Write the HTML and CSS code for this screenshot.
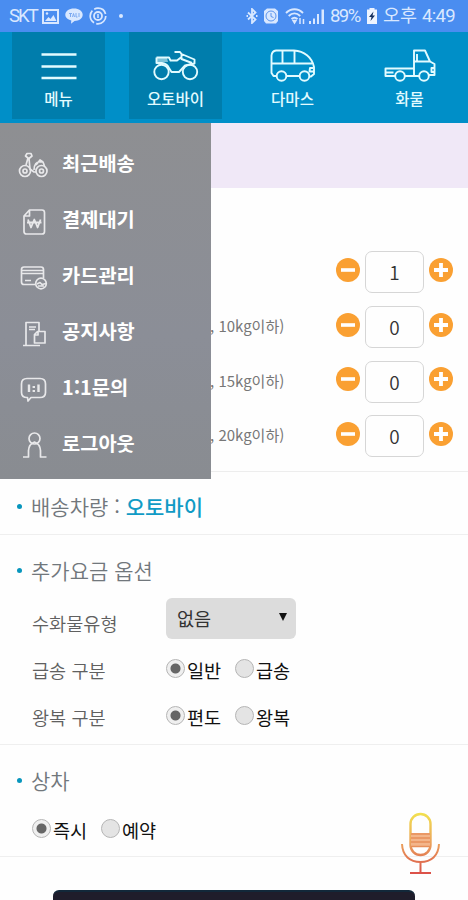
FILE: index.html
```html
<!DOCTYPE html>
<html lang="ko">
<head>
<meta charset="utf-8">
<title>배송 접수</title>
<link rel="stylesheet" href="styles.css">
</head>
<body>
<svg class="defs" width="0" height="0">
  <symbol id="minus" viewBox="0 0 24 24"><circle cx="12" cy="12" r="12" fill="#faa032"/><path d="M5 12h14" stroke="#fff" stroke-width="3.6"/></symbol>
  <symbol id="plus" viewBox="0 0 24 24"><circle cx="12" cy="12" r="12" fill="#faa032"/><path d="M5 12h14M12 5v14" stroke="#fff" stroke-width="3.8"/></symbol>
</svg>
<div class="app">
  <header class="status">
    <div class="status-left">
      <span class="carrier">SKT</span>
      <svg width="17" height="15" viewBox="0 0 17 15"><rect x="1" y="1" width="15" height="13" fill="none" stroke="currentColor" stroke-width="2"/><path d="M3 12l3.500-4 2 2 3-4 3 6z" fill="currentColor"/><circle cx="5" cy="4.500" r="1.200" fill="currentColor"/></svg>
      <svg class="talk" width="18" height="16" viewBox="0 0 18 16"><path d="M9 .5c5 0 8.700 2.700 8.700 6.300S14 13 9.500 13L6 15.700l.3-3.200C2.700 11.700.3 9.500.3 6.800.3 3.200 4 .5 9 .5z" fill="currentColor"/><path d="M4 5.500h3M5.500 5.500v3.500M7.500 9l1-3.500 1 3.500M11 5v4h1.500M14 5v4" stroke="#7ba9f1" fill="none"/></svg>
      <svg class="ring" width="18" height="18" viewBox="0 0 18 18" fill="none" stroke="currentColor"><circle cx="9" cy="9" r="7.800" stroke-width="1.700" stroke-dasharray="14 2.300"/><circle cx="9" cy="9" r="4" stroke-width="1.800"/><path d="M9 7v4" stroke-width="1.500"/></svg>
      <i class="dot"></i>
    </div>
    <div class="status-right">
      <svg width="12" height="16" viewBox="0 0 12 16" fill="none" stroke="currentColor" stroke-width="1.800"><path d="M2 4.500l7.500 7L6 15V1l3.500 3.500L2 11.500"/><path d="M.5 8h1.500M10 8h1.500"/></svg>
      <svg class="alarm" width="16" height="16" viewBox="0 0 16 16"><path d="M1 3l3-2.500h8L15 3v10l-2 2.500H3L1 13z" fill="currentColor"/><circle cx="8" cy="8" r="5" fill="none" stroke="#5b94ee" stroke-width="1"/><path d="M8 5v3.500l2.500 1" fill="none" stroke="#5b94ee"/></svg>
      <svg class="wifi" width="21" height="17" viewBox="0 0 21 17" fill="none" stroke="currentColor" stroke-width="1.900"><path d="M1 5c5-5 12-5 17 0M3.700 8c3.500-3.300 8-3.300 11.500 0M6.500 11c2-1.800 4-1.800 6 0"/><path d="M8 12.500h3l-1.500 2.500zM15 10v6M18.500 11v5" stroke-width="1.500"/></svg>
      <svg class="signal" width="17" height="16" viewBox="0 0 17 16" fill="currentColor"><path d="M1 13h2v3H1zM5 10.500h2V16H5zM9 6h2v10H9zM13.500 1.500H16V16h-2.500z"/></svg>
      <span class="pct">89%</span>
      <svg class="battery" width="12" height="16" viewBox="0 0 12 16"><path d="M3.500 0h5v1.500H11V16H1V1.500h2.500z" fill="#eef4ff"/><path d="M7.500 3.500L3 9h2.500L4.500 13 9 7.500H6.500z" fill="#16305e"/></svg>
      <span class="ampm">오후</span>
      <span class="clock">4:49</span>
    </div>
  </header>

  <nav class="tabs">
    <a class="tab on">
      <svg width="46" height="36" viewBox="0 0 46 36"><path d="M5.500 6.500h35M5.500 18.500h35M5.500 30h35" stroke="currentColor" stroke-width="2.500"/></svg>
      <span>메뉴</span>
    </a>
    <a class="tab on">
      <svg width="46" height="36" viewBox="0 0 46 36" fill="none" stroke="currentColor" stroke-width="1.900" stroke-linejoin="round"><circle cx="8.500" cy="24" r="7.200"/><circle cx="37" cy="24" r="7.200"/><path d="M3.500 9.500H16L17.500 12.500H24L28.500 9M21.500 4H27L28.500 6 41.500 11.500V15.500L32 17.500 26 24H18.500L15 18.500M3.500 9.500V15H9Q13.500 15.500 15.500 19M28.500 6V11L39 15"/><path d="M4 10h10l1 4H4z" fill="currentColor" fill-opacity=".55" stroke="none"/></svg>
      <span>오토바이</span>
    </a>
    <a class="tab">
      <svg width="46" height="36" viewBox="0 0 46 36" fill="none" stroke="currentColor" stroke-width="1.900" stroke-linejoin="round"><path d="M6 28H3.500L1.500 25V7.500Q2 3 6 2.500H24C34 3 42 9 44 19V26L41 28.500H40M16 28H30M1.500 15.500H42M12.500 3v12.500M24.500 3v12.500M43 20h-3l-.5 3.500H44"/><circle cx="11.500" cy="28" r="4.800"/><circle cx="34.500" cy="28" r="4.800"/></svg>
      <span>다마스</span>
    </a>
    <a class="tab">
      <svg width="52" height="36" viewBox="0 0 52 36" fill="none" stroke="currentColor" stroke-width="1.900" stroke-linejoin="round"><path d="M11 28H1.500V20.500H30M21 28h14M30 28V2.500H41L46 13.500 50.500 16V27H45M30 13.500H46M1.500 24.500h8M50.500 20h-3v4h3M33 6v7.500"/><circle cx="16" cy="28" r="4.800"/><circle cx="40" cy="28" r="4.800"/></svg>
      <span>화물</span>
    </a>
  </nav>

  <main class="content">
    <div class="banner"></div>
    <section class="sizes">
      <div class="size"><span class="limit"></span><svg><use href="#minus"/></svg><span class="qty">1</span><svg><use href="#plus"/></svg></div>
      <div class="size"><span class="limit">, 10kg이하)</span><svg><use href="#minus"/></svg><span class="qty">0</span><svg><use href="#plus"/></svg></div>
      <div class="size"><span class="limit">, 15kg이하)</span><svg><use href="#minus"/></svg><span class="qty">0</span><svg><use href="#plus"/></svg></div>
      <div class="size"><span class="limit">, 20kg이하)</span><svg><use href="#minus"/></svg><span class="qty">0</span><svg><use href="#plus"/></svg></div>
    </section>
    <section class="vehicle">
      <h2>배송차량 : <b>오토바이</b></h2>
    </section>
    <section class="extras">
      <h2>추가요금 옵션</h2>
      <div class="field pick"><span class="name">수화물유형</span><span class="select">없음<i></i></span></div>
      <div class="field"><span class="name">급송 구분</span><span class="radio"><i class="checked"></i>일반</span><span class="radio"><i></i>급송</span></div>
      <div class="field"><span class="name">왕복 구분</span><span class="radio"><i class="checked"></i>편도</span><span class="radio"><i></i>왕복</span></div>
    </section>
    <section class="pickup">
      <h2>상차</h2>
      <div class="field"><span class="radio"><i class="checked"></i>즉시</span><span class="radio"><i></i>예약</span></div>
    </section>
    <div class="submit"></div>
  </main>

  <aside class="drawer">
    <a><svg viewBox="0 0 32 32"><circle cx="8" cy="22" r="5.500"/><circle cx="8" cy="22" r="2"/><circle cx="24.500" cy="22" r="5.500"/><circle cx="24.500" cy="22" r="2"/><path d="M9 16L11 9 8.500 7 10 4.500h4L15 7l-3 2.500L13 20l4 3h2M17 21c0-6 3-8 5-8h4l1.500 4M19 16l4-5 3 2"/></svg>최근배송</a>
    <a><svg viewBox="0 0 32 32"><path d="M12.500 5H25q2.500 0 2.500 2.500v19Q27.500 29 25 29H9.500Q7 29 7 26.500V11zM12.500 5v6H7"/><path d="M11 14.500l3 8 3.300-8 3.300 8 3-8M10 17.500h14.500" stroke-width="1.800"/></svg>결제대기</a>
    <a><svg viewBox="0 0 32 32"><path d="M18 23.500H7Q4.500 23.500 4.500 21V8.500Q4.500 6 7 6H24Q26.500 6 26.500 8.500V17M4.500 9.500H26.500M4.500 12.500H26.500M8 19.500h6"/><circle cx="24" cy="22.500" r="5.300"/><path d="M20 23l3-1.500 2 2 4-1M21 25h6"/></svg>카드관리</a>
    <a><svg viewBox="0 0 32 32"><path d="M6 28.500h17M9 28V5.500H22V14M12 10h7M12 12.500h6M20.500 14.500H28V26H17.500V17.500zM21 14.500V18h-3.500"/></svg>공지사항</a>
    <a><svg viewBox="0 0 32 32"><path d="M10 5.500H23q5.500 0 5.500 5.500v8.500q0 5-5.500 5H14l-3 3.500-.5-3.500H10q-5.500 0-5.500-5V11q0-5.500 5.500-5.500z"/><path d="M12 11.500v7.500M21.500 11.500v7.500M16.800 13v2M16.800 17v2" stroke-width="2.400"/></svg>1:1문의</a>
    <a><svg viewBox="0 0 32 32"><circle cx="17.500" cy="9.500" r="5.500"/><path d="M6 28h5.500V21.500Q12 15 17.500 13 23 15 23.500 21.500V28H29.500"/></svg>로그아웃</a>
  </aside>

  <svg class="mic" width="42" height="64" viewBox="0 0 42 64" fill="none">
    <defs><linearGradient id="warm" x1="0" y1="0" x2="0" y2="64" gradientUnits="userSpaceOnUse"><stop offset="0" stop-color="#f2e34f"/><stop offset=".5" stop-color="#eba05c"/><stop offset="1" stop-color="#d84a45"/></linearGradient></defs>
    <rect x="10.500" y="2" width="20" height="41" rx="10" stroke="url(#warm)" stroke-width="2.400"/>
    <path d="M11 21H30V35H11z" fill="#f3b58a"/>
    <path d="M11 22H30M11 26H30M11 30H30M11 34.500H30" stroke="#e78f5a" stroke-width="1.500"/>
    <path d="M2 32C2.500 44 10 50 20.500 50S38.500 44 39 32M20.500 50V60" stroke="url(#warm)" stroke-width="2"/>
    <path d="M10 61H31" stroke="#dc5249" stroke-width="2"/>
  </svg>
</div>
</body>
</html>
```
FILE: styles.css
```css
* { box-sizing: border-box; }
body { margin: 0; background: #fefefe; font-family: "Noto Sans CJK KR", sans-serif; }
.defs { position: absolute; }
.app { position: relative; width: 468px; height: 900px; overflow: hidden; background: #fefefe; }

.status { display: flex; justify-content: space-between; height: 32px; padding: 0 13px 0 9px; background: #4a8df0; color: #d9e8ff; font: 18.5px/32px Roboto, "Noto Sans CJK KR", sans-serif; }
.status-left, .status-right { display: flex; align-items: center; }
.status svg { flex: none; }
.carrier { width: 33px; letter-spacing: -1.9px; }
.talk { margin-left: 6px; }
.ring { margin-left: 6px; }
.dot { width: 4px; height: 4px; margin-left: 12px; border-radius: 50%; background: #d9e8ff; }
.alarm { margin-left: 5px; }
.wifi { margin-left: 6px; }
.signal { margin-left: 2px; }
.pct { width: 32px; margin-left: 5px; letter-spacing: -1.5px; }
.battery { margin-left: 4px; }
.ampm { margin-left: 5px; }
.clock { width: 33px; margin-left: 5px; letter-spacing: -.7px; }

.tabs { display: grid; grid-template-columns: repeat(4, 1fr); height: 91px; padding-bottom: 4px; background: #008fc8; color: #e2fbff; }
.tab { display: flex; flex-direction: column; align-items: center; margin: 0 12px; padding-top: 16px; font-size: 15.5px; font-weight: 500; line-height: 22px; }
.tab span { margin-top: 3px; }
.tab.on { background: #007dac; }

.banner { height: 65px; background: #f0e8f7; }
.sizes { height: 284px; padding: 57px 14px 0 211px; border-bottom: 1px solid #ededed; }
.size { display: flex; align-items: center; height: 54.7px; }
.size svg { width: 24px; height: 24px; margin-top: -5px; }
.limit { width: 126px; margin: -3px 0 0 -1px; font-size: 15px; color: #777; white-space: pre; }
.qty { width: 59px; height: 42px; margin: 0 5px 0 5px; border: 1.5px solid #d6d6d6; border-radius: 7px; color: #333; font: 350 19px/39px "Noto Sans CJK KR", sans-serif; text-align: center; }

h2 { display: flex; align-items: center; margin: 0; color: #71777c; font-size: 21px; font-weight: 350; line-height: 30px; white-space: pre; }
h2::before { content: ""; width: 5px; height: 5px; margin: 0 9px 0 17px; border-radius: 50%; background: #0896bd; }
h2 b { color: #109bc5; font-weight: 500; }
.vehicle { height: 63px; padding-top: 19px; border-bottom: 1px solid #efefef; }
.extras { height: 210px; padding-top: 20px; border-bottom: 1px solid #efefef; }
.field { display: flex; align-items: center; height: 47px; padding-left: 32px; color: #111; font-size: 18.6px; font-weight: 400; }
.name { width: 134px; color: #606060; font-weight: 350; }
.pick { height: 61px; }
.pick .name { padding-top: 14px; }
.select { display: flex; align-items: center; justify-content: space-between; width: 130px; height: 41px; margin-top: 5px; padding: 0 9px 2px 11px; border-radius: 6px; background: #dcdcdc; color: #333; }
.select i { border: 4px solid transparent; border-top: 8px solid #111; border-bottom: 0; }
.radio { display: flex; align-items: center; width: 69px; line-height: 24px; white-space: nowrap; }
.radio i { flex: none; width: 19px; height: 19px; margin: -3px 2px 0 0; border: 1.5px solid #b5b5b5; border-radius: 50%; background: #e4e4e4; }
.radio .checked { background: radial-gradient(circle, #666 0 4.5px, #efefef 5.5px); }
.pickup { height: 112px; padding-top: 20px; border-bottom: 1px solid #efefef; }
.pickup .field { height: 69px; }
.submit { height: 40px; margin: 33px 53px 0; border-top: 2px solid #12283a; border-radius: 6px 6px 0 0; background: #1f1d2b; }

.drawer { position: absolute; top: 123px; left: 0; width: 211px; height: 356px; padding-top: 11px; background: linear-gradient(#8e8f92, #8b8e97 60%, #898c91); }
.drawer a { display: flex; align-items: center; height: 56px; padding-left: 17px; color: #fff; font-size: 19.8px; font-weight: 700; }
.drawer svg { width: 32px; height: 32px; margin: 5px 13px 0 0; fill: none; stroke: #e8e8ea; stroke-width: 1.7; stroke-linejoin: round; }
.mic { position: absolute; left: 400px; top: 812px; }
```
